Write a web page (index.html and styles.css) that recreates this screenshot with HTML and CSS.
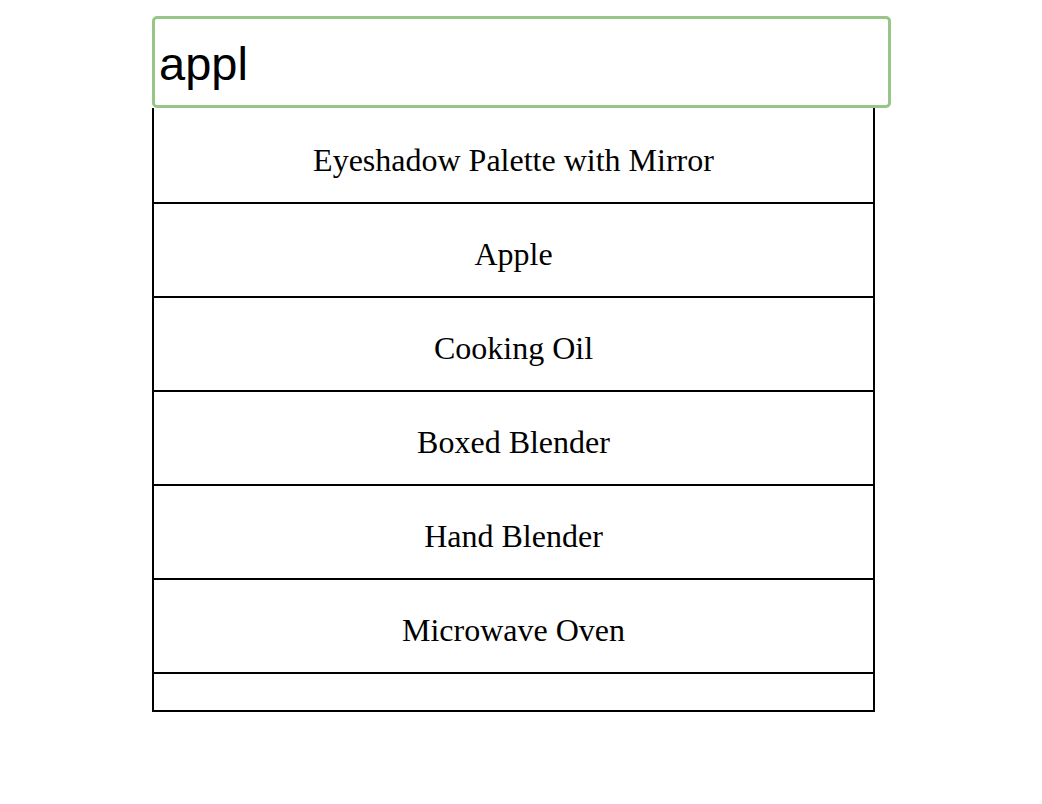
FILE: index.html
```html
<!DOCTYPE html>
<html lang="en">
<head>
<meta charset="utf-8">
<title>Search</title>
<link rel="stylesheet" href="styles.css">
</head>
<body>
<div class="search">
  <input class="search-input" type="text" value="appl">
  <ul class="results">
    <li class="result">Eyeshadow Palette with Mirror</li>
    <li class="result">Apple</li>
    <li class="result">Cooking Oil</li>
    <li class="result">Boxed Blender</li>
    <li class="result">Hand Blender</li>
    <li class="result">Microwave Oven</li>
    <li class="result result-empty"></li>
  </ul>
</div>
</body>
</html>
```
FILE: styles.css
```css
html, body {
  margin: 0;
  padding: 0;
  background: #ffffff;
}

body {
  padding: 16px 0 0 152px;
  font-family: "Liberation Serif", "Times New Roman", serif;
}

.search {
  display: flex;
  flex-direction: column;
  align-items: flex-start;
}

.search-input {
  box-sizing: border-box;
  width: 739px;
  height: 92px;
  margin: 0;
  padding: 2px 4px 0;
  border: 3px solid #98c689;
  border-radius: 5px;
  font-family: "Liberation Sans", Arial, sans-serif;
  font-size: 47px;
  color: #000;
  background: #fff;
  outline: none;
}

.results {
  box-sizing: border-box;
  width: 723px;
  margin: 0;
  padding: 0;
  list-style: none;
  border-left: 2px solid #000;
  border-right: 2px solid #000;
}

.result {
  box-sizing: content-box;
  padding: 32px 0 24px;
  height: 36px;
  line-height: 36px;
  font-size: 32px;
  text-align: center;
  color: #000;
  border-bottom: 2px solid #000;
}

.result:first-child {
  padding-top: 34px;
}

.result-empty {
  padding: 0;
  height: 36px;
}
```
